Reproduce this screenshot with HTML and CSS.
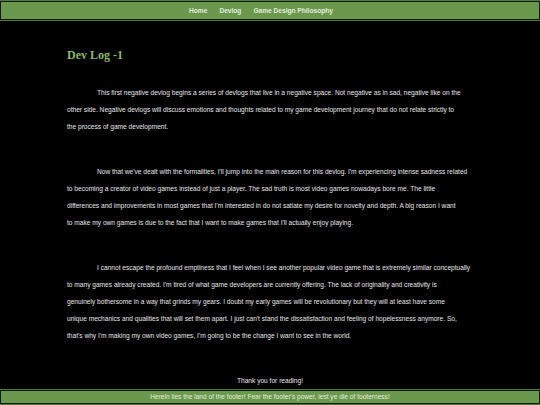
FILE: index.html
```html
<!DOCTYPE html>
<html>
<head>
<meta charset="utf-8">
<link rel="stylesheet" href="styles.css">
</head>
<body>
<div class="page">
  <nav class="nav">
    <a class="nav-link" href="#">Home</a>
    <a class="nav-link" href="#">Devlog</a>
    <a class="nav-link" href="#">Game Design Philosophy</a>
  </nav>
  <main class="content">
    <h1 class="title">Dev Log -1</h1>
    <p class="para">This first negative devlog begins a series of devlogs that live in a negative space. Not negative as in sad, negative like on the<br>other side. Negative devlogs will discuss emotions and thoughts related to my game development journey that do not relate strictly to<br>the process of game development.</p>
    <p class="para">Now that we've dealt with the formalities, I'll jump into the main reason for this devlog. I'm experiencing intense sadness related<br>to becoming a creator of video games instead of just a player. The sad truth is most video games nowadays bore me. The little<br>differences and improvements in most games that I'm interested in do not satiate my desire for novelty and depth. A big reason I want<br>to make my own games is due to the fact that I want to make games that I'll actually enjoy playing.</p>
    <p class="para">I cannot escape the profound emptiness that I feel when I see another popular video game that is extremely similar conceptually<br>to many games already created. I'm tired of what game developers are currently offering. The lack of originality and creativity is<br>genuinely bothersome in a way that grinds my gears. I doubt my early games will be revolutionary but they will at least have some<br>unique mechanics and qualities that will set them apart. I just can't stand the dissatisfaction and feeling of hopelessness anymore. So,<br>that's why I'm making my own video games, I'm going to be the change I want to see in the world.</p>
    <p class="thanks">Thank you for reading!</p>
  </main>
  <footer class="footer">Herein lies the land of the footer! Fear the footer's power, lest ye die of footerness!</footer>
</div>
</body>
</html>
```

FILE: styles.css
```css
html, body {
  margin: 0;
  padding: 0;
  background: #000;
}

.page {
  min-height: 405px;
  display: flex;
  flex-direction: column;
  font-family: "Liberation Sans", Arial, sans-serif;
}

.nav {
  margin-top: 1px;
  height: 17px;
  padding-right: 18px;
  background: #6a994e;
  border: 1px solid #101a0c;
  box-shadow: 0 0 0 1px #54793f;
  display: flex;
  justify-content: center;
  align-items: center;
  gap: 12px;
}

.nav-link {
  color: #e4ecdc;
  font-size: 6.6px;
  font-weight: bold;
  text-decoration: none;
}

.content {
  width: 406px;
  margin: 0 auto 0 67px;
  padding-top: 28px;
}

.title {
  margin: 0 0 22px;
  font-family: "Liberation Serif", "Times New Roman", serif;
  font-size: 12px;
  line-height: 14px;
  font-weight: bold;
  color: #8bb96c;
}

.para {
  margin: 0 0 28px;
  font-size: 6.6px;
  line-height: 17px;
  color: #e6e6e6;
  text-indent: 30px;
  white-space: nowrap;
}

.para:last-of-type {
  margin-bottom: 17px;
}

.thanks {
  margin: 0;
  font-size: 6.6px;
  line-height: 17px;
  color: #e6e6e6;
  text-align: center;
}

.footer {
  margin-top: auto;
  margin-bottom: 1px;
  height: 12px;
  background: #6a994e;
  border: 1px solid #101a0c;
  box-shadow: 0 0 0 1px #54793f;
  color: #e4ecdc;
  font-size: 6.6px;
  line-height: 12px;
  text-align: center;
}
```
